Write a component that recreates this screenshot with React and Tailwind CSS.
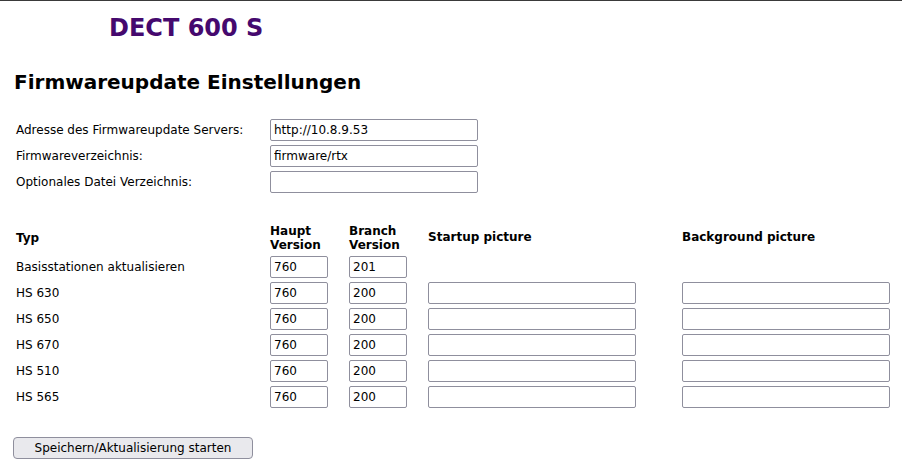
import React from "react";

const font = { fontFamily: "'DejaVu Sans', Verdana, sans-serif" };

const settings = [
  { label: "Adresse des Firmwareupdate Servers:", value: "http://10.8.9.53" },
  { label: "Firmwareverzeichnis:", value: "firmware/rtx" },
  { label: "Optionales Datei Verzeichnis:", value: "" },
];

const handsets = [
  { typ: "HS 630", haupt: "760", branch: "200" },
  { typ: "HS 650", haupt: "760", branch: "200" },
  { typ: "HS 670", haupt: "760", branch: "200" },
  { typ: "HS 510", haupt: "760", branch: "200" },
  { typ: "HS 565", haupt: "760", branch: "200" },
];

function Field({ value, className = "" }) {
  return (
    <input
      type="text"
      defaultValue={value}
      className={`h-[22px] border border-[#8f8f9d] rounded-[2px] bg-white px-[3px] text-[12px] text-black outline-none ${className}`}
      style={font}
    />
  );
}

export default function App() {
  return (
    <div className="min-h-screen w-[902px] bg-white text-black border-t border-[#3a3a3a]" style={font}>
      <h1 className="pl-[109px] pt-[12px] text-[24px] font-bold leading-[30px] text-[#45096e]">DECT 600 S</h1>

      <h2 className="pl-[14px] mt-[27px] text-[20px] font-bold leading-[24px]">Firmwareupdate Einstellungen</h2>

      <div className="mt-[25px] pl-[16px] flex flex-col gap-[4px]">
        {settings.map((s) => (
          <div key={s.label} className="flex items-center">
            <span className="w-[254px] text-[12px]">{s.label}</span>
            <Field value={s.value} className="w-[208px]" />
          </div>
        ))}
      </div>

      <div className="mt-[31px] pl-[16px] grid grid-cols-[254px_79px_79px_254px_208px] items-center gap-y-[4px] text-[12px]">
        <div className="font-bold self-end pb-[5px]">Typ</div>
        <div className="font-bold leading-[14px]">Haupt<br />Version</div>
        <div className="font-bold leading-[14px]">Branch<br />Version</div>
        <div className="font-bold self-end pb-[6px]">Startup picture</div>
        <div className="font-bold self-end pb-[6px]">Background picture</div>

        <div>Basisstationen aktualisieren</div>
        <Field value="760" className="w-[58px]" />
        <Field value="201" className="w-[58px]" />
        <div />
        <div />

        {handsets.map((h) => (
          <React.Fragment key={h.typ}>
            <div>{h.typ}</div>
            <Field value={h.haupt} className="w-[58px]" />
            <Field value={h.branch} className="w-[58px]" />
            <Field value="" className="w-[208px]" />
            <Field value="" className="w-[208px]" />
          </React.Fragment>
        ))}
      </div>

      <div className="mt-[27px] pl-[13px]">
        <button
          className="h-[22px] w-[240px] bg-[#e9e9ed] border border-[#8f8f9d] rounded-[4px] text-[12px] text-black"
          style={font}
        >
          Speichern/Aktualisierung starten
        </button>
      </div>
    </div>
  );
}
